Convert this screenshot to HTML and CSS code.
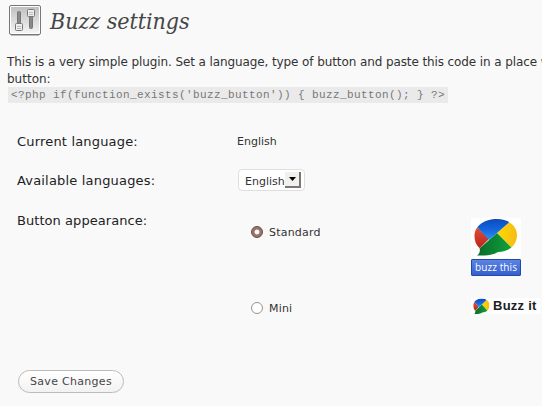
FILE: index.html
```
<!DOCTYPE html>
<html lang="en">
<head>
<meta charset="utf-8">
<title>Buzz settings</title>
<link rel="stylesheet" href="styles.css">
</head>
<body>
<svg class="defs" width="0" height="0" aria-hidden="true">
  <defs>
    <linearGradient id="blue" x2="0" y2="1"><stop stop-color="#0a48ba"/><stop offset=".5" stop-color="#1464dc"/><stop offset="1" stop-color="#2e92f2"/></linearGradient>
    <linearGradient id="red" x2="0" y2="1"><stop stop-color="#e45a3e"/><stop offset="1" stop-color="#b51e16"/></linearGradient>
    <linearGradient id="yellow" x2="1" y2="0"><stop stop-color="#ffd900"/><stop offset="1" stop-color="#f5b51c"/></linearGradient>
    <linearGradient id="green" x2="1" y2="0"><stop stop-color="#056128"/><stop offset="1" stop-color="#12a43b"/></linearGradient>
    <linearGradient id="metal" x2="0" y2="1"><stop stop-color="#c0c0c0"/><stop offset="1" stop-color="#f4f4f4"/></linearGradient>
    <clipPath id="bubble"><path d="M26 1C38 1 46 8 46 17C46 27 38 34 27 34C22 37 15 38 6 37.500C8.500 36 9.500 33 8.500 30C5 27 3.500 23 3.500 18C3.500 8 13 1 26 1Z"/></clipPath>
    <symbol id="buzz" viewBox="0 0 50 40" preserveAspectRatio="none">
      <g clip-path="url(#bubble)">
        <path fill="url(#red)" d="M0 4L6 9L18 21L7 32L0 34Z"/>
        <path fill="url(#yellow)" d="M26 15L37 5L50 0V33L41 30Z"/>
        <path fill="url(#green)" d="M26 15L42 31V40H0V36L8 31Z"/>
        <path fill="url(#blue)" d="M0 0H43L26 15L18 22L6 9Z"/>
      </g>
    </symbol>
  </defs>
</svg>
<header class="header">
  <svg class="settings-icon" viewBox="0 0 32 31" width="32" height="31">
    <rect x=".5" y=".5" width="31" height="29" rx="1.5" fill="#fff" stroke="#777"/>
    <rect x="2" y="2" width="28" height="26" fill="url(#metal)"/>
    <path d="M2 30.5H30" stroke="#bbb"/>
    <rect x="8.5" y="6.5" width="3" height="17" rx="1" fill="#888" stroke="#777"/>
    <rect x="20.5" y="6.5" width="3" height="17" rx="1" fill="#888" stroke="#777"/>
    <rect x="6.500" y="18.500" width="7" height="7" rx="1" fill="#eee" stroke="#777"/>
    <rect x="18.500" y="4.500" width="7" height="7" rx="1" fill="#eee" stroke="#777"/>
    <path d="M8 21.500H12M8 23.500H12M20 7.500H24M20 9.500H24" stroke="#bbb"/>
  </svg>
  <h1>Buzz settings</h1>
</header>
<div class="intro">
  <p><span class="tight">This is a very simple plugin. Set a language, type of button and paste this code in a place w</span><br>button:</p>
  <code>&lt;?php if(function_exists('buzz_button')) { buzz_button(); } ?&gt;</code>
</div>
<form class="settings">
  <div class="row current"><div class="label">Current language:</div><div>English</div></div>
  <div class="row available"><div class="label">Available languages:</div>
    <div class="select"><span>English</span><span class="arrow"><svg width="7" height="4" viewBox="0 0 7 4"><path d="M0 0H7L3.500 4Z"/></svg></span></div>
  </div>
  <div class="row appearance"><div class="label">Button appearance:</div>
    <div class="choices">
      <div class="choice standard"><span class="radio checked"></span><span>Standard</span>
        <div class="big"><svg width="50" height="40"><use href="#buzz"/></svg><div class="badge">buzz this</div></div>
      </div>
      <div class="choice mini"><span class="radio"></span><span>Mini</span>
        <div class="small"><svg width="20" height="17"><use href="#buzz" x="1" width="19" height="17"/></svg><b>Buzz it</b></div>
      </div>
    </div>
  </div>
  <button type="button" class="save">Save Changes</button>
</form>
</body>
</html>
```
FILE: styles.css
```
* { box-sizing: border-box; }
body { margin: 0; width: 542px; height: 406px; overflow: hidden; background: #f9f9f9; color: #333; font: 11px/16px "DejaVu Sans", sans-serif; }
.defs { position: absolute; }
.header { display: flex; height: 54px; padding: 5px 0 0 9px; }
.settings-icon { flex: none; }
h1 { margin: 0 0 0 9px; padding-top: 1px; font: italic 23px/31px "DejaVu Serif Condensed", "DejaVu Serif", serif; letter-spacing: -.05px; color: #464646; white-space: nowrap; }
.intro { padding-left: 7px; height: 77px; overflow: hidden; }
.intro p { margin: 0; font-size: 12px; line-height: 17px; height: 33px; white-space: nowrap; }
.tight { letter-spacing: -.1px; }
code { display: block; width: 440px; height: 16px; margin: 0 0 0 1px; padding-left: 3px; background: #eaeaea; color: #777; font: 11px/17px "Liberation Mono", monospace; letter-spacing: .4px; white-space: pre; }
.settings { padding-left: 17px; }
.row { display: grid; grid-template-columns: 220px 305px; align-items: start; }
.label { font-size: 13px; line-height: 20px; letter-spacing: .18px; color: #222; white-space: nowrap; }
.current { height: 38px; padding-top: 1px; }
.current > :last-child { padding-top: 2px; }
.available { height: 42px; }
.available .label { padding-top: 2px; }
.appearance .label { letter-spacing: .06px; }
.select { display: flex; align-items: center; width: 67px; height: 22px; margin-left: 1px; padding: 0 2px 0 6px; border: 1px solid #dfdfdf; border-radius: 4px; background: #fff; }
.select span:first-child { width: 40px; padding-top: 3px; }
.arrow { display: flex; align-items: center; justify-content: center; width: 16px; height: 16px; border: solid #777; border-width: 0 2px 2px 0; background: #f1f0ed; }
.appearance { height: 159px; }
.choices { padding: 7px 0 0 14px; }
.choice { display: grid; grid-template-columns: 18px 202px auto; align-items: start; }
.choice > span:nth-child(2) { padding-top: 7px; letter-spacing: .2px; }
.standard { height: 80px; }
.radio { width: 12px; height: 12px; margin-top: 8px; border: 1px solid #98938f; border-radius: 50%; background: #fff; }
.checked { border-color: #5f4e48; background: radial-gradient(circle, #fff 0 2px, #9c7468 2.800px); }
.big { width: 50px; }
.big svg { display: block; background: #fff; }
.badge { height: 17px; margin-top: 1px; border: 1px solid #234b9e; border-radius: 1px; background: linear-gradient(#5c83e4, #3460d0); color: #fff; text-align: center; font: 10px/15px "Open Sans", sans-serif; letter-spacing: .1px; white-space: nowrap; }
.choice.mini > span:nth-child(2) { padding-top: 3px; }
.mini .radio { margin-top: 4px; }
.small { display: flex; align-items: center; gap: 2px; width: 69px; height: 16px; background: #fff; color: #222; font: 13px/16px "Liberation Sans", sans-serif; letter-spacing: .25px; white-space: nowrap; }
.small svg { flex: none; }
.save { display: block; width: 106px; height: 23px; margin: 0 0 0 1px; padding: 0; border: 1px solid #bbb; border-radius: 12px; background: linear-gradient(#fff, #f2f2f2); color: #464646; font: 11px/20px "DejaVu Sans", sans-serif; letter-spacing: .3px; }
```
